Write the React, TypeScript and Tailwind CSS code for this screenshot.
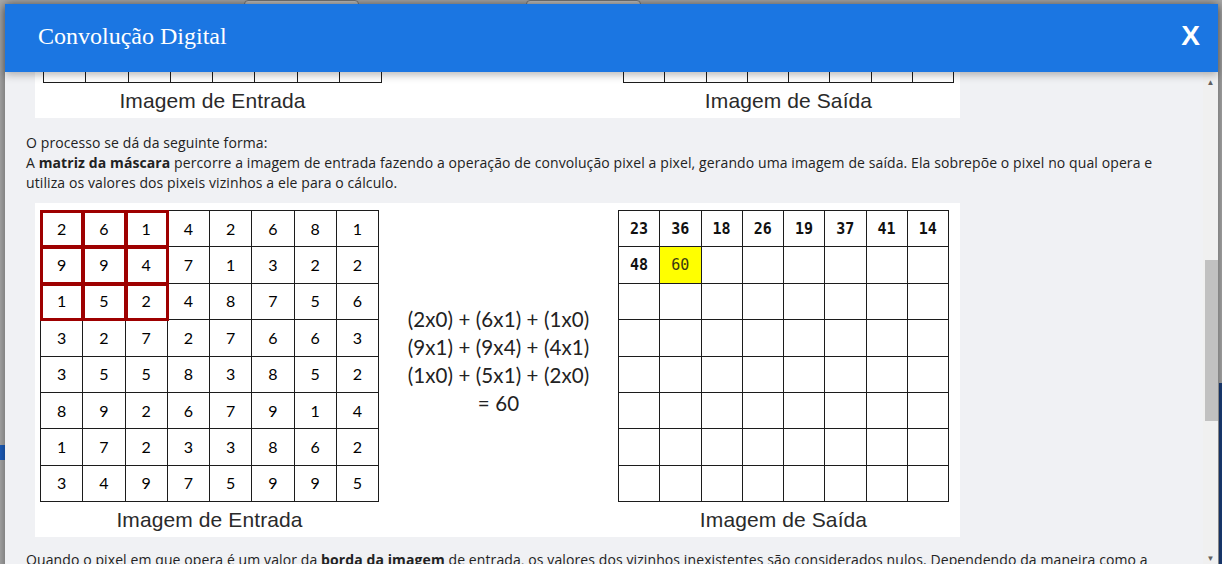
import { useLayoutEffect, useRef } from 'react'

const entrada = [
  [2, 6, 1, 4, 2, 6, 8, 1],
  [9, 9, 4, 7, 1, 3, 2, 2],
  [1, 5, 2, 4, 8, 7, 5, 6],
  [3, 2, 7, 2, 7, 6, 6, 3],
  [3, 5, 5, 8, 3, 8, 5, 2],
  [8, 9, 2, 6, 7, 9, 1, 4],
  [1, 7, 2, 3, 3, 8, 6, 2],
  [3, 4, 9, 7, 5, 9, 9, 5],
]

const saidaTopo = ['23', '36', '18', '26', '19', '37', '41', '14']

function InputGrid({ mask }: { mask: boolean }) {
  return (
    <div className="grid grid-cols-8 grid-rows-8 w-[339px] h-[292px] border-t border-l border-[#1c1c1c] bg-white">
      {entrada.flatMap((row, r) =>
        row.map((v, c) => {
          const inMask = mask && r < 3 && c < 3
          return (
            <div
              key={`${r}-${c}`}
              className={
                'flex items-center justify-center border-r border-b border-[#1c1c1c] text-[16px] text-[#000] font-["Lato",sans-serif] ' +
                (inMask ? 'relative z-10 outline-[3px] -outline-offset-2 outline-[#9e0000] shadow-[0_0_0_1px_rgba(255,60,60,0.55)]' : '')
              }
            >
              {v}
            </div>
          )
        })
      )}
    </div>
  )
}

function OutputGrid({ filled }: { filled: boolean }) {
  const cells = []
  for (let r = 0; r < 8; r++) {
    for (let c = 0; c < 8; c++) {
      let txt = ''
      let hl = false
      if (filled && r === 0) txt = saidaTopo[c]
      if (filled && r === 1 && c === 0) txt = '48'
      if (filled && r === 1 && c === 1) {
        txt = '60'
        hl = true
      }
      cells.push(
        <div
          key={`${r}-${c}`}
          className={
            'flex items-center justify-center border-r border-b border-[#1c1c1c] text-[15px] font-["DejaVu_Sans_Mono",monospace] ' +
            (hl ? 'bg-[#ffff00] text-[#3a3a10]' : 'text-[#111] font-bold')
          }
        >
          {txt}
        </div>
      )
    }
  }
  return (
    <div className="grid grid-cols-8 grid-rows-8 w-[331px] h-[292px] border-t border-l border-[#1c1c1c] bg-white">
      {cells}
    </div>
  )
}

function Caption({ children }: { children: string }) {
  return (
    <div className="text-center text-[21px] leading-[26px] text-[#2a2a2a] font-['Liberation_Sans',Arial,sans-serif] mt-[5px]">
      {children}
    </div>
  )
}

function ConvImage({ exemplo }: { exemplo: boolean }) {
  return (
    <div className={'w-[925px] h-[334px] bg-white flex pt-[7px] ml-[9px] ' + (exemplo ? 'pl-[5px]' : 'pl-[8px]')}>
      <div className="flex flex-col">
        <InputGrid mask={exemplo} />
        <Caption>Imagem de Entrada</Caption>
      </div>
      <div className={'flex flex-col items-center justify-center h-[292px] ' + (exemplo ? 'w-[239px]' : 'w-[241px]')}>
        {exemplo && (
          <div className="text-center text-[20.5px] leading-[28px] text-[#222] font-['Lato',sans-serif] pt-[10px]">
            <div>(2x0) + (6x1) + (1x0)</div>
            <div>(9x1) + (9x4) + (4x1)</div>
            <div>(1x0) + (5x1) + (2x0)</div>
            <div>= 60</div>
          </div>
        )}
      </div>
      <div className="flex flex-col">
        <OutputGrid filled={exemplo} />
        <Caption>Imagem de Saída</Caption>
      </div>
    </div>
  )
}

export default function App() {
  const scrollRef = useRef<HTMLDivElement>(null)

  useLayoutEffect(() => {
    if (scrollRef.current) scrollRef.current.scrollTop = 288
  }, [])

  return (
    <div className="relative w-[1222px] h-[564px] overflow-hidden bg-[#a9a9a9]">
      {/* pagina por tras do modal */}
      <div className="absolute top-0 left-[244px] w-[115px] h-[6px] rounded-t-[4px] border border-[#777] bg-[#c4c4c4]" />
      <div className="absolute top-0 left-[526px] w-[115px] h-[6px] rounded-t-[4px] border border-[#777] bg-[#c4c4c4]" />
      <div className="absolute top-[445px] left-0 w-[5px] h-[15px] bg-[#1d5fbf]" />
      <div className="absolute top-[383px] right-0 w-[3px] h-[181px] bg-[#1b3d78]" />

      <div className="absolute left-[5px] top-[4px] w-[1213px] h-[580px] flex flex-col bg-[#f0f1f4] shadow-[0_0_10px_rgba(0,0,0,0.45)]">
        <div className="relative z-20 h-[68px] shrink-0 bg-[#1b76e2] flex items-center justify-between pl-[33px] pr-[18px] pb-[5px] shadow-[0_3px_8px_rgba(0,0,0,0.28)]">
          <h1 className="text-white text-[24px] font-['Liberation_Serif','Times_New_Roman',serif]">Convolução Digital</h1>
          <button className="text-white text-[28px] font-bold font-['Liberation_Sans',Arial,sans-serif] leading-none">X</button>
        </div>

        <div className="flex-1 flex min-h-0">
          <div
            ref={scrollRef}
            className="flex-1 overflow-y-auto [scrollbar-width:none] pl-[21px] pr-[24px] text-[14px] leading-[20px] tracking-[0.1px] text-[#222] font-['Open_Sans',sans-serif]"
          >
            <ConvImage exemplo={false} />
            <p className="mt-[15px] mb-[10px]">
              O processo se dá da seguinte forma:
              <br />
              A <b>matriz da máscara</b> percorre a imagem de entrada fazendo a operação de convolução pixel a pixel, gerando uma
              imagem de saída. Ela sobrepõe o pixel no qual opera e utiliza os valores dos pixeis vizinhos a ele para o cálculo.
            </p>
            <ConvImage exemplo={true} />
            <p className="mt-[13px] pb-[40px]">
              Quando o pixel em que opera é um valor da <b>borda da imagem</b> de entrada, os valores dos vizinhos inexistentes são
              considerados nulos. Dependendo da maneira como a convolução é aplicada, a imagem de saída pode ter tamanho menor que a
              de entrada.
            </p>
          </div>

          <div className="w-[15px] shrink-0 flex flex-col items-center bg-[#f0f0f0]">
            <div className="h-[20px] flex items-center justify-center text-[8px] text-[#606060]">▲</div>
            <div className="flex-1 w-full relative">
              <div className="absolute left-[2px] right-0 top-[168px] h-[161px] bg-[#c1c1c1]" />
            </div>
            <div className="h-[36px] flex items-start justify-center pt-[4px] text-[8px] text-[#606060]">▼</div>
          </div>
        </div>
      </div>
    </div>
  )
}
